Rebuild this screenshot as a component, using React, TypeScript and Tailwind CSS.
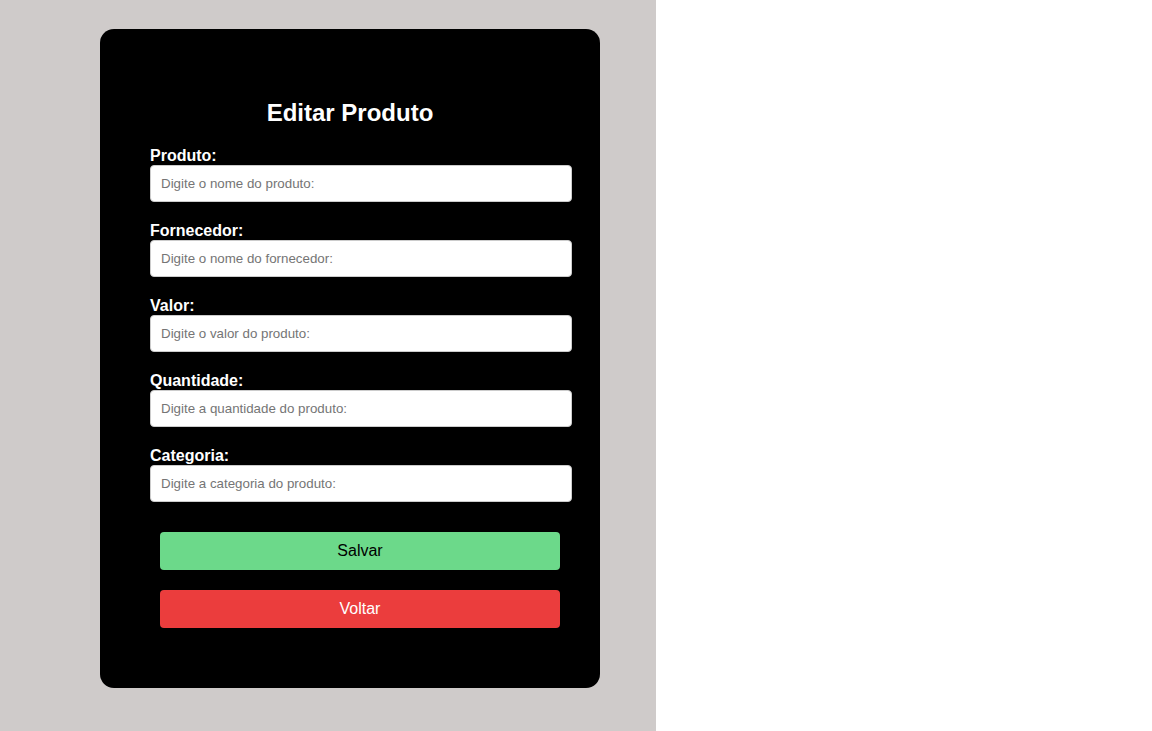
import React from "react";

const fields = [
  { label: "Produto:", ph: "Digite o nome do produto:" },
  { label: "Fornecedor:", ph: "Digite o nome do fornecedor:" },
  { label: "Valor:", ph: "Digite o valor do produto:" },
  { label: "Quantidade:", ph: "Digite a quantidade do produto:" },
  { label: "Categoria:", ph: "Digite a categoria do produto:" },
];

export default function App() {
  return (
    <div
      className="flex w-[1152px] h-[731px] bg-white"
      style={{ fontFamily: '"Liberation Sans", Arial, sans-serif' }}
    >
      <div className="w-[656px] h-[731px] bg-[#cfcbca] pt-[29px] pl-[100px]">
        <div className="w-[500px] h-[659px] bg-black rounded-[14px] pt-[70px] pl-[50px] flex flex-col">
          <h2 className="w-[400px] text-center text-white font-bold text-[24px] leading-[28px] mb-[20px]">
            Editar Produto
          </h2>
          {fields.map((f, i) => (
            <div key={i} className="flex flex-col mb-[20px]">
              <label className="text-white font-bold text-[16px] leading-[18px]">{f.label}</label>
              <input
                placeholder={f.ph}
                className="w-[422px] h-[37px] bg-white rounded-[4px] border border-[#cccccc] px-[10px] text-[13.333px] text-black placeholder:text-[#757575] outline-none"
              />
            </div>
          ))}
          <button className="mt-[10px] ml-[10px] w-[400px] h-[38px] rounded-[4px] bg-[#6cd98a] text-black text-[16px]">
            Salvar
          </button>
          <button className="mt-[20px] ml-[10px] w-[400px] h-[38px] rounded-[4px] bg-[#eb3d3d] text-white text-[16px]">
            Voltar
          </button>
        </div>
      </div>
      <div className="flex-1 bg-white" />
    </div>
  );
}
